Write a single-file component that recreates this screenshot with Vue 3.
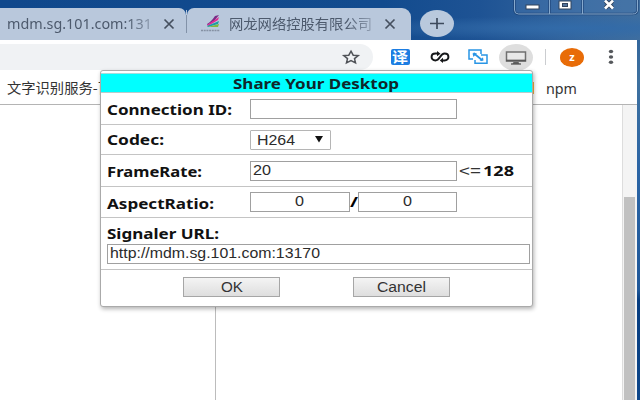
<script setup>
import { h } from 'vue'

// A single line of text fitted to a given width.
const Fit = (props) =>
  h('svg', { width: props.w, height: 20, viewBox: `0 0 ${props.w} 20` }, [
    h('text', { x: 0, y: 15, textLength: props.w, lengthAdjust: 'spacingAndGlyphs', fill: 'currentColor' }, props.t),
  ])
Fit.props = ['t', 'w']
</script>

<template>
  <div class="screen">
    <div class="browser">
      <header class="tabs">
        <div class="tab first">
          <Fit class="tabtext fade" t="mdm.sg.101.com:131" :w="145" />
          <svg class="x1" width="12" height="10" viewBox="0 0 12 10"><path d="M1.5 .5l9 9M10.5 .5l-9 9" stroke="#46505f" stroke-width="1.7" /></svg>
        </div>
        <i class="tabsep"></i>
        <div class="tab second">
          <svg class="fav" width="22" height="18" viewBox="0 0 22 18">
            <path d="M7 9Q11 7 15 1l4-1-5 6-7 4z" fill="#7a2a86" />
            <path d="M7 10l12-8-1 3-10 6z" fill="#e02a91" />
            <path d="M7 11l12-5-1 3-10 3z" fill="#1d9ca5" />
            <path d="M8 12l11-3-1 3H8z" fill="#82b83c" />
            <path d="M1 15.500h19" stroke="#8591a3" stroke-width="1.600" stroke-dasharray="2 .7" />
          </svg>
          <Fit class="tabtext cjk fade" t="网龙网络控股有限公司" :w="143" />
          <svg class="x2" width="12" height="10" viewBox="0 0 12 10"><path d="M1.500 .5l9 9M10.500 .5l-9 9" stroke="#46505f" stroke-width="1.700" /></svg>
        </div>
        <svg class="plus" width="34" height="27" viewBox="0 0 34 27"><ellipse cx="17" cy="13.500" rx="17" ry="13.500" fill="#b9c9dd" /><path d="M10 13.500h14M17 8v11" stroke="#3d4a5c" stroke-width="1.700" /></svg>
        <svg class="winctl" width="127" height="18" viewBox="0 0 127 18">
          <path d="M1.500-1v11q0 4 4 4h114q5 0 5-4V-1M36.500-1v15M69.500-1v15" fill="#5c89bc" fill-opacity=".25" stroke="#173b6c" stroke-opacity=".7" stroke-width="2.400" />
          <path d="M1.500-1v11q0 4 4 4h114q5 0 5-4V-1M36.500-1v15M69.500-1v15" fill="none" stroke="#86a9cd" />
          <rect x="13" y="5" width="13" height="4" fill="#fff" stroke="#33445c" />
          <rect x="46" y="1" width="12" height="8" fill="#fff" stroke="#33445c" />
          <rect x="49.500" y="3.500" width="5" height="3" fill="#53749d" stroke="#33445c" />
          <path d="M92.500 1l7 7M99.500 1l-7 7" stroke="#33445c" stroke-width="4.500" />
          <path d="M92 .5l8 8M100 .5l-8 8" stroke="#fff" stroke-width="2.600" />
        </svg>
      </header>

      <div class="toolbar">
        <div class="omnibox">
          <svg width="18" height="14" viewBox="0 0 18 14"><path d="M9 1.200l2.200 4 5 .4-3.700 3 1 4.200L9 10.500l-4.500 2.300 1-4.200-3.700-3 5-.4z" fill="none" stroke="#505358" stroke-width="1.500" /></svg>
        </div>
        <span class="translate"><Fit class="yi" t="译" :w="16" /></span>
        <svg class="loop" width="20" height="12" viewBox="0 0 20 12"><path d="M8.300 2.600H5.500C.3 2.600.3 9.400 5.500 9.400c4.500 0 4.500-6.800 9-6.800 5.200 0 5.200 6.800 0 6.800H12" fill="none" stroke="#16181a" stroke-width="2" /><path d="M7 0l3.500 2.700L7 5.200zM13 6.800L9.800 9.400 13 12z" fill="#16181a" /></svg>
        <svg class="swap" width="20" height="16" viewBox="0 0 20 16"><path d="M5 10H1V1h12v4M9.500 14.200H19V6H13M7 11v3.200h3" fill="none" stroke="#2995e5" stroke-width="1.500" /><path d="M5.500 4l9 7.500" fill="none" stroke="#2995e5" stroke-width="1.700" /><path d="M4.500 4.500L9 4 5.500 8zM15.500 11.500l-4 .3 3.500-3.500z" fill="#2995e5" /></svg>
        <svg class="monitor" width="34" height="27" viewBox="0 0 34 27"><ellipse cx="17" cy="13.500" rx="17" ry="13.500" fill="#dedede" /><rect x="7.500" y="8" width="19" height="9" fill="#e8e8e8" stroke="#707070" stroke-width="1.500" /><path d="M7 16.500h20" stroke="#585858" stroke-width="1.700" /><path d="M14.500 18h5l1 2h-7z" fill="#606060" /><path d="M12 20h10" stroke="#555" stroke-width="1.300" /></svg>
        <i class="divider"></i>
        <span class="avatar">z</span>
        <svg class="dots" width="6" height="16" viewBox="0 0 6 16"><ellipse cx="3" cy="2.500" rx="2.200" ry="1.700" fill="#55585c" /><ellipse cx="3" cy="8" rx="2.200" ry="1.700" fill="#55585c" /><ellipse cx="3" cy="13.300" rx="2.200" ry="1.700" fill="#55585c" /></svg>
      </div>

      <div class="bookmarks">
        <Fit class="mark cjk" t="文字识别服务-百" :w="105" />
        <i class="folder"></i>
        <Fit class="mark npm" t="npm" :w="31" />
      </div>
      <main class="page"><div class="side"></div><div class="scroll"><i></i></div></main>
    </div>

    <section class="dialog">
      <h1><Fit t="Share Your Desktop" :w="166" /></h1>
      <div class="row r1"><label><Fit t="Connection ID:" :w="125" /></label><span class="field wide"></span></div>
      <div class="row r2"><label><Fit t="Codec:" :w="57" /></label><span class="field select"><Fit t="H264" :w="38" /><svg width="8" height="7" viewBox="0 0 8 7"><path d="M0 0h8L4 6.500z" fill="#111" /></svg></span></div>
      <div class="row r3"><label><Fit t="FrameRate:" :w="95" /></label><span class="field wide"><Fit t="20" :w="18" /></span><Fit class="le" t="&lt;=" :w="22" /><Fit class="limit" t="128" :w="31" /></div>
      <div class="row r4"><label><Fit t="AspectRatio:" :w="107" /></label><span class="field ratio"><Fit t="0" :w="9" /></span><svg class="slash" width="8" height="20" viewBox="0 0 8 20"><text x="0" y="15" textLength="8" lengthAdjust="spacingAndGlyphs">/</text></svg><span class="field ratio last"><Fit t="0" :w="9" /></span></div>
      <div class="row r5"><Fit class="urlabel" t="Signaler URL:" :w="112" /><span class="field url"><Fit t="http://mdm.sg.101.com:13170" :w="210" /></span></div>
      <div class="row r6"><button><Fit t="OK" :w="22" /></button><button><Fit t="Cancel" :w="49" /></button></div>
    </section>
  </div>
</template>

<style>
body { margin: 0; overflow: hidden; }
</style>
<style scoped>
* { box-sizing: border-box; }
svg { display: block; flex: none; overflow: visible; }
.screen { position: relative; width: 640px; height: 400px; overflow: hidden; background: linear-gradient(180deg, #275b99 0, #3f719f 80px, #2b65a5 170px, #205899 290px, #073d80 300px, #0e478a 400px); }
.browser { width: 640px; }
.tabs { display: flex; height: 40px; padding-top: 8px; background: radial-gradient(ellipse at 90% 70%, #326ba9 0, transparent 30%), linear-gradient(90deg, #10488c 0, #124b8e 60%, #1e5394 75%, #34669e 90%, #3f6e9f 100%); }
.tab { height: 32px; display: flex; flex: none; background: #b9c8dc; }
.first { width: 186px; padding-left: 7px; border-radius: 0 7px 0 0; }
.tabsep { width: 1px; height: 32px; background: linear-gradient(#b9c8dc, #b9c8dc) 0 2px/1px 5px no-repeat, linear-gradient(#8292a8, #8292a8) 0 7px/1px 18px no-repeat, linear-gradient(#b9c8dc, #b9c8dc) 0 25px/1px 7px no-repeat; }
.second { width: 224px; border-radius: 7px 9px 0 0; }
.tabtext { margin-top: 6px; color: #4d5a6d; font: 13.500px "Noto Sans", sans-serif; }
.cjk { font-family: "Noto Sans CJK SC", sans-serif; }
.fade { -webkit-mask-image: linear-gradient(90deg, #000 82%, rgba(0,0,0,.35)); }
.x1 { margin: 11px 0 0 11px; }
.fav { margin: 7px 7px 0 13px; }
.x2 { margin: 11px 0 0 12px; }
.plus { margin: 2px 0 0 9px; }
.winctl { margin: -8px 0 0 59px; }
.toolbar { width: 637px; height: 31px; background: #fff; display: flex; align-items: flex-start; padding-top: 4px; }
.omnibox { width: 373px; height: 26px; border-radius: 0 15px 15px 0; background: #f0f2f4; padding: 6px 0 0 342px; flex: none; }
.translate { width: 19px; height: 16px; margin: 5px 0 0 18px; background: #1c7de2; border-radius: 2px; padding: 0 1px; color: #fff; flex: none; }
.yi { margin-top: -2px; font: bold 14px "Noto Sans CJK SC", sans-serif; }
.loop { margin: 7px 0 0 20px; }
.swap { margin: 5px 0 0 18px; }
.monitor { margin: 0 0 0 11px; }
.divider { width: 1px; height: 16px; margin: 5px 0 0 12px; background: #cbcdd0; }
.avatar { width: 24px; height: 19px; margin: 4px 0 0 14px; border-radius: 50%; background: #e86c08; color: #fff; font: bold 11px/17px "Noto Sans", sans-serif; text-align: center; }
.dots { margin: 5px 0 0 24px; }
.bookmarks { width: 637px; height: 34px; padding-left: 7px; display: flex; background: #fff; border-bottom: 1px solid #b4b4b4; }
.mark { margin-top: 7px; color: #333; font-size: 13.500px; }
.folder { width: 5px; height: 12px; margin: 11px 0 0 417px; background: #f5b33d; }
.mark.npm { margin: 8px 0 0 12px; font: 13.500px "Noto Sans", sans-serif; }
.page { width: 637px; height: 295px; display: flex; justify-content: space-between; background: #fff; }
.side { width: 216px; border-right: 1px solid #bcbcbc; }
.scroll { width: 15px; border-left: 1px solid #ddd; background: #f4f4f4; padding: 92px 2px 0 1px; }
.scroll i { display: block; width: 11px; height: 210px; background: #c1c1c1; }
.dialog { position: absolute; left: 100px; top: 70px; width: 433px; height: 237px; background: #fff; border: 1px solid #aaa; border-radius: 3px; box-shadow: 1px 2px 4px rgba(0,0,0,.3); font: 14px "Liberation Sans", sans-serif; color: #2b2b2b; }
.dialog h1 { margin: 2px 0 0; height: 20px; border-top: 1px solid #a6dcdc; border-bottom: 1px solid #b5cccc; background: #0ff; padding-left: 132px; color: #10262a; font: bold 14px "Noto Sans", sans-serif; }
h1 svg { margin-top: 0; }
.row { display: flex; border-bottom: 1px solid #c4c4c4; padding-left: 6px; }
.r1 { height: 32px; padding-top: 6px; }
.r2 { height: 30px; padding-top: 5px; }
.r3 { height: 32px; padding-top: 6px; }
.r4 { height: 31px; padding-top: 5px; }
.r5 { height: 52px; display: block; padding-top: 6px; }
.r6 { height: 34px; border: 0; padding: 7px 0 0 82px; gap: 73px; }
label { width: 143px; padding-top: 1px; flex: none; color: #111; font: bold 14px "Noto Sans", sans-serif; }
.r2 label { padding-top: 0; }
.r4 label { padding-top: 2px; }
.field { display: flex; flex: none; height: 20px; border: 1px solid #a0a0a0; background: #fff; padding-left: 2px; }
.field svg { margin-top: -2px; }
.wide { width: 207px; }
.select { width: 81px; height: 20px; padding-left: 6px; border-radius: 1px; border-color: #b5b5b5; }
.select svg { margin-top: -1px; }
.select svg + svg { margin: 5px 0 0 20px; }
.le { margin-left: 2px; color: #333; }
.limit { margin-left: 2px; color: #111; font: bold 14px "Noto Sans", sans-serif; }
.ratio { width: 100px; padding-left: 44px; }
.ratio.last { width: 99px; }
.slash { font: bold 14px "Noto Sans", sans-serif; }
.urlabel { color: #111; font: bold 14px "Noto Sans", sans-serif; }
.url { width: 423px; }
button { width: 97px; height: 20px; display: flex; justify-content: center; padding: 0; border: 1px solid #a6a6a6; background: linear-gradient(#f4f4f4, #dedede); color: #333; font: 14px "Liberation Sans", sans-serif; }
button svg { margin-top: -1px; }
</style>
